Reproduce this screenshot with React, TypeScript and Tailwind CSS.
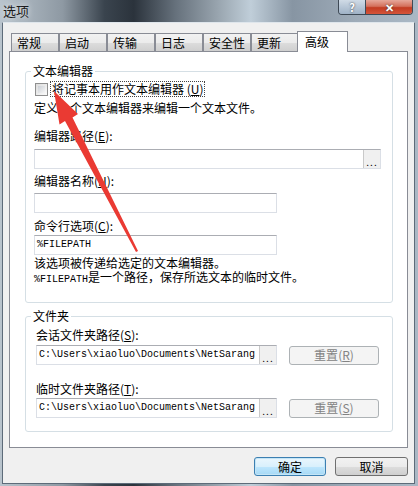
import React from "react";

const cjk = "font-['Noto_Sans_CJK_SC','Noto_Sans',sans-serif]";
const mono = "font-['Liberation_Mono',monospace]";

function Key({ k }: { k: string }) {
  return (
    <>
      (<span className="underline">{k}</span>)
    </>
  );
}

function Tab({ label, active }: { label: string; active?: boolean }) {
  if (active) {
    return (
      <div className="relative z-10 -mb-px -ml-[2px] h-[21px] w-[51px] border border-b-0 border-[#898c95] bg-white pl-[7px] pt-[3px] leading-[14px]">
        {label}
      </div>
    );
  }
  return (
    <div className="h-[18px] w-[48px] border border-b-0 border-[#898c95] bg-[linear-gradient(180deg,#f2f2f2_0%,#ebebeb_50%,#dddddd_51%,#cfcfcf_100%)] pl-[5px] pt-[2px] leading-[14px]">
      {label}
    </div>
  );
}

function PathInput({ value, width, text, mono: isMono }: { value?: string; width: string; text?: boolean; mono?: boolean }) {
  return (
    <div className={`relative flex h-[20px] ${width} items-center overflow-hidden border border-[#dbdfe6] border-t-[#abadb3] bg-white`}>
      {value && (
        <span className={`whitespace-nowrap pl-[2px] text-[10px] leading-[12px] ${isMono ? mono : ""}`}>{value}</span>
      )}
      {text && (
        <div className="absolute right-0 top-0 flex h-[18px] w-[17px] items-end justify-center border-l border-[#c9c9c9] bg-[#f0f0f0] pb-[1px] text-[10px] leading-[10px] tracking-[1px]">
          ...
        </div>
      )}
    </div>
  );
}

function ResetButton({ label, k }: { label: string; k: string }) {
  return (
    <div className="ml-[12px] flex h-[19px] w-[90px] items-center justify-center rounded-[3px] border border-[#adb2b5] bg-[#f4f4f4] text-[#838383] leading-[14px]">
      {label}
      <Key k={k} />
    </div>
  );
}

export default function App() {
  return (
    <div className={`relative h-[486px] w-[418px] overflow-hidden bg-[linear-gradient(90deg,#b9c4cd_0%,#8e99a3_15%,#3a444e_25%,#2b333c_32%,#66717c_42%,#98a4ae_52%,#c0ced9_60%,#8795a3_70%,#9eabb8_85%,#aab8c5_100%)] ${cjk} text-[12px] text-black`}>
      {/* Title bar */}
      <div className="flex h-[22px] items-start justify-between">
        <div className="pl-[3px] pt-[3px] text-[13px] leading-[16px] text-[#1b1b1b] [text-shadow:0_0_6px_rgba(255,255,255,0.9)]">
          选项
        </div>
        <div className="mr-[5px] flex h-[15px] overflow-hidden rounded-b-[4px] border border-t-0 border-[#3f4a56]">
          <div className="flex w-[27px] items-center justify-center border-r border-[#3f4a56] bg-[linear-gradient(180deg,#d0dbe6_0%,#b7c6d6_50%,#9fb2c6_100%)] text-[11px] font-bold leading-[11px] text-white [text-shadow:0_0_2px_#333]">
            ?
          </div>
          <div className="flex w-[46px] items-center justify-center bg-[linear-gradient(180deg,#e6a89b_0%,#d4705c_45%,#c23b22_55%,#d5553a_100%)] text-[11px] font-bold leading-[11px] text-white [text-shadow:0_0_2px_#333]">
            ✕
          </div>
        </div>
      </div>

      {/* Client */}
      <div className="ml-[2px] h-[462px] w-[413px] border border-[#5d6b79] border-t-[#dfe6ec] bg-[#f0f0f0] px-[6px] pt-[8px]">
        <div className="flex h-[20px] items-end pl-[2px]">
          <Tab label="常规" />
          <Tab label="启动" />
          <Tab label="传输" />
          <Tab label="日志" />
          <Tab label="安全性" />
          <Tab label="更新" />
          <Tab label="高级" active />
        </div>

        <div className="h-[397px] w-[399px] border border-[#898c95] bg-white pl-[15px] pt-[11px]">
          {/* 文本编辑器 */}
          <fieldset className="w-[368px] rounded-[3px] border border-[#d5dfe5] pb-[15px] pl-[8px] pt-[2px]">
            <legend className="-ml-[3px] px-[2px] leading-[16px]">文本编辑器</legend>
            <div className="flex h-[16px] items-center pl-[1px]">
              <div className="h-[13px] w-[13px] border border-[#8f8f8f] bg-[linear-gradient(135deg,#dcdcdc,#fbfbfb)] p-[2px]">
                <div className="h-full w-full bg-[linear-gradient(135deg,#cbcfd5,#f6f6f6)]" />
              </div>
              <div className="ml-[2px] border border-dotted border-[#444] px-[1px] leading-[14px]">
                将记事本用作文本编辑器 <Key k="U" />
              </div>
            </div>
            <div className="mt-[3px] leading-[16px]">定义一个文本编辑器来编辑一个文本文件。</div>
            <div className="mt-[12px] leading-[16px]">
              编辑器路径<Key k="E" />:
            </div>
            <div className="mt-[5px]">
              <PathInput width="w-[347px]" text />
            </div>
            <div className="mt-[4px] leading-[16px]">
              编辑器名称<Key k="N" />:
            </div>
            <div className="mt-[4px]">
              <PathInput width="w-[243px]" />
            </div>
            <div className="mt-[5px] leading-[16px]">
              命令行选项<Key k="C" />:
            </div>
            <div className="mt-[1px]">
              <PathInput width="w-[243px]" value="%FILEPATH" mono />
            </div>
            <div className="mt-[1px] leading-[14px]">
              <div>该选项被传递给选定的文本编辑器。</div>
              <div>
                <span className={`${mono} text-[10px]`}>%FILEPATH</span>是一个路径，保存所选文本的临时文件。
              </div>
            </div>
          </fieldset>

          {/* 文件夹 */}
          <fieldset className="mt-[5px] w-[368px] rounded-[3px] border border-[#d5dfe5] pb-[13px] pl-[10px] pt-[3px]">
            <legend className="-ml-[5px] px-[2px] leading-[16px]">文件夹</legend>
            <div className="leading-[16px]">
              会话文件夹路径<Key k="S" />:
            </div>
            <div className="mt-[2px] flex items-center">
              <PathInput width="w-[241px]" value="C:\Users\xiaoluo\Documents\NetSarang" text mono />
              <ResetButton label="重置" k="R" />
            </div>
            <div className="mt-[16px] leading-[16px]">
              临时文件夹路径<Key k="T" />:
            </div>
            <div className="mt-[1px] flex items-center">
              <PathInput width="w-[241px]" value="C:\Users\xiaoluo\Documents\NetSarang" text mono />
              <ResetButton label="重置" k="S" />
            </div>
          </fieldset>
        </div>

        {/* Bottom buttons */}
        <div className="mt-[9px] flex justify-end gap-[9px]">
          <div className="flex h-[19px] w-[72px] items-center justify-center rounded-[3px] border border-[#3c7fb1] bg-[linear-gradient(180deg,#eaf6fd_0%,#d9f0fc_50%,#bee6fd_51%,#a7d9f5_100%)] leading-[14px] shadow-[inset_0_0_0_1px_#c4e5f6]">
            确定
          </div>
          <div className="flex h-[19px] w-[73px] items-center justify-center rounded-[3px] border border-[#707070] bg-[linear-gradient(180deg,#f2f2f2_0%,#ebebeb_50%,#dddddd_51%,#cfcfcf_100%)] leading-[14px]">
            取消
          </div>
        </div>
      </div>

      {/* Red annotation arrow */}
      <svg className="pointer-events-none absolute left-0 top-0" width="418" height="486" viewBox="0 0 418 486">
        <polygon
          points="54,91 78,114 72.5,117.5 138,251 136,252 65,121 59.5,124.5"
          fill="#ea3a33"
        />
      </svg>
    </div>
  );
}
